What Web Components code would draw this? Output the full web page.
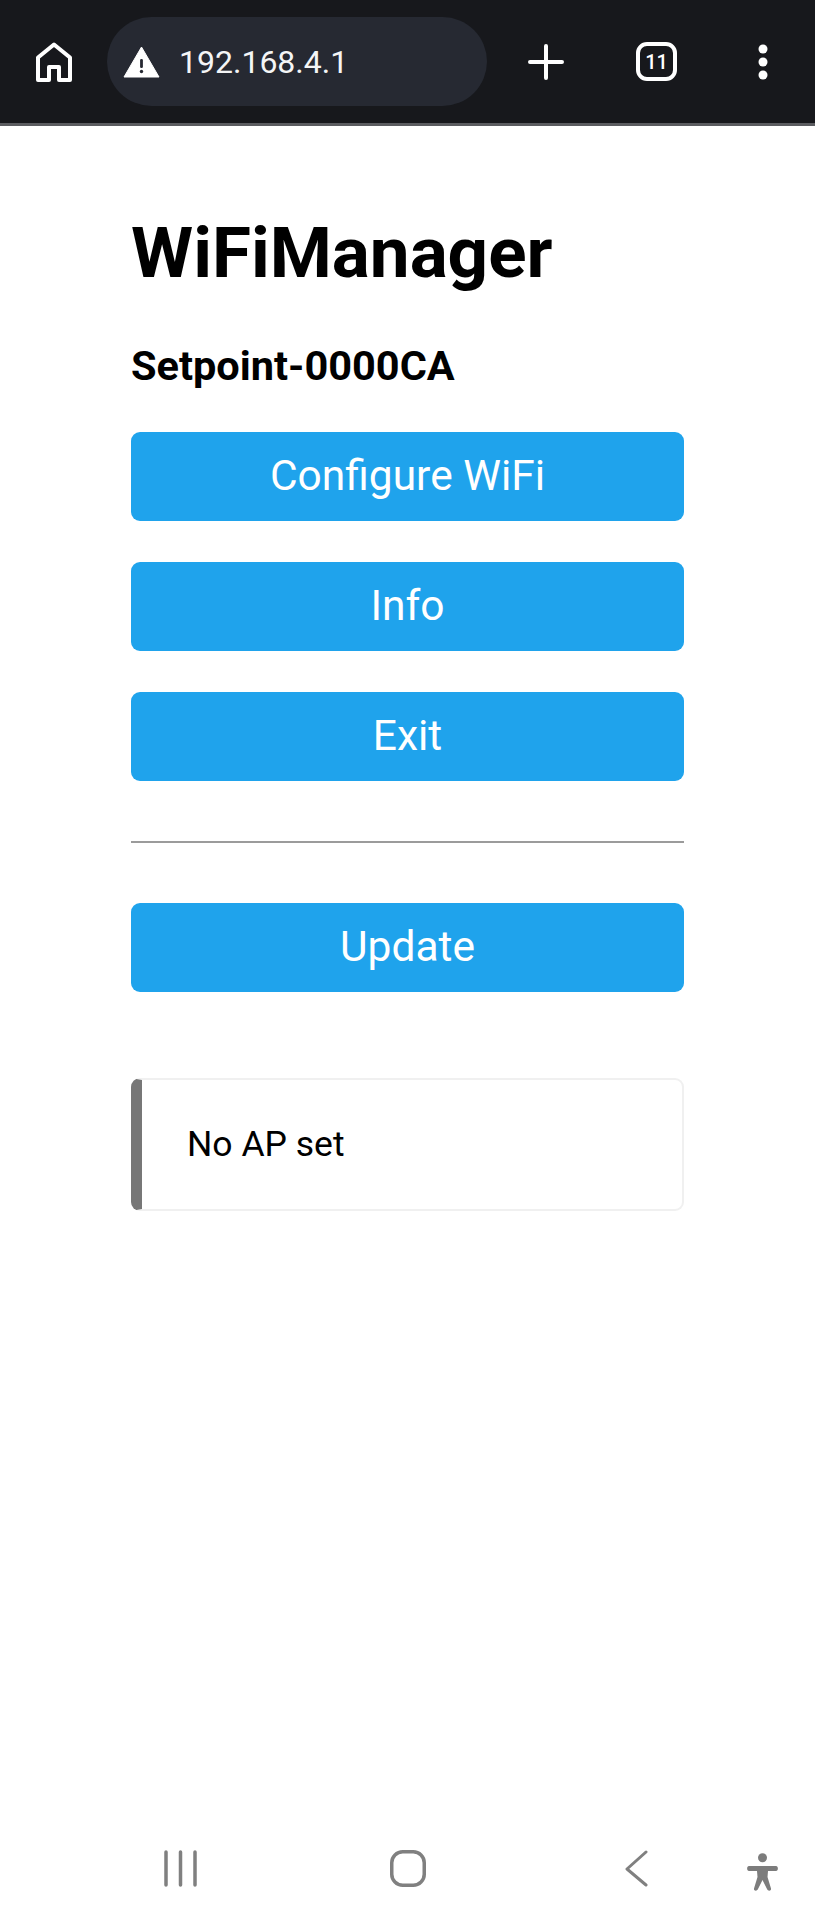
<!DOCTYPE html>
<html>
<head>
<meta charset="utf-8">
<title>WiFiManager</title>
<style>
    html, body { margin: 0; padding: 0; background: #fff; }
    body { font-family: Roboto, "Liberation Sans", sans-serif; width: 815px; height: 1920px; overflow: hidden; }
    .screen { display: flex; flex-direction: column; height: 1920px; }
</style>
</head>
<body>
<div class="screen">
    <browser-bar url="192.168.4.1" tabs="11"></browser-bar>
    <wm-page>
        <wm-title slot="head" sub="Setpoint-0000CA">WiFiManager</wm-title>
        <wm-button>Configure WiFi</wm-button>
        <wm-button>Info</wm-button>
        <wm-button>Exit</wm-button>
        <wm-rule></wm-rule>
        <wm-button>Update</wm-button>
        <wm-msg>No AP set</wm-msg>
    </wm-page>
    <nav-bar></nav-bar>
</div>

<script>
/* || Browser chrome */
const BrowserBarTemplate = document.createElement("template");
BrowserBarTemplate.innerHTML = `
    <style>
        :host {
            display: flex;
            flex: none;
            align-items: center;
            box-sizing: border-box;
            height: 126px;
            padding: 0 0 0 36px;
            background: #17181c;
            border-bottom: 3px solid #5b5c60;
            color: #fff;
        }
        svg { display: block; flex: none; }
        #pill {
            display: flex;
            align-items: center;
            box-sizing: border-box;
            width: 380px;
            height: 89px;
            margin-left: 35px;
            padding-left: 16px;
            border-radius: 45px;
            background: #262932;
        }
        #url {
            margin-left: 19px;
            font-size: 32px;
            color: #f4f5f6;
        }
        #plus { margin-left: 41px; }
        #tabs {
            display: flex;
            align-items: center;
            justify-content: center;
            box-sizing: border-box;
            width: 41px;
            height: 39px;
            margin-left: 72px;
            border: 4px solid #fff;
            border-radius: 11px;
            font-size: 20px;
            font-weight: 500;
        }
        #dots { margin-left: 81px; }
    </style>
    <svg width="36" height="40" viewBox="0 0 36 40" fill="none" stroke="#fff" stroke-width="4" stroke-linejoin="round">
        <path d="M2 38V15.500L18 2.500L34 15.500V38H23V25H13V38Z"/>
    </svg>
    <div id="pill">
        <svg width="37" height="32" viewBox="0 0 37 32">
            <path fill="#fff" stroke="#fff" stroke-width="1" stroke-linejoin="round" d="M18.500 1L36 31H1Z"/>
            <rect x="17.100" y="13" width="2.800" height="9" rx="1.200" fill="#262932"/>
            <circle cx="18.500" cy="25.500" r="1.700" fill="#262932"/>
        </svg>
        <span id="url"></span>
    </div>
    <svg id="plus" width="36" height="36" viewBox="0 0 36 36" stroke="#fff" stroke-width="4" stroke-linecap="round">
        <path d="M18 2V34M2 18H34"/>
    </svg>
    <div id="tabs"></div>
    <svg id="dots" width="10" height="36" viewBox="0 0 10 36" fill="#fff">
        <circle cx="5" cy="5" r="4.500"/><circle cx="5" cy="18" r="4.500"/><circle cx="5" cy="31" r="4.500"/>
    </svg>
`;

class BrowserBar extends HTMLElement {
    constructor() {
        super();
        this.attachShadow( {mode: 'open'} );
        this.shadowRoot.appendChild(BrowserBarTemplate.content.cloneNode(true));
    }
    connectedCallback() {
        this.shadowRoot.querySelector("#url").textContent = this.getAttribute("url");
        this.shadowRoot.querySelector("#tabs").textContent = this.getAttribute("tabs");
    }
}
customElements.define("browser-bar", BrowserBar);


/* || Page column */
const PageTemplate = document.createElement("template");
PageTemplate.innerHTML = `
    <style>
        :host {
            display: flex;
            flex-direction: column;
            flex: 1;
            box-sizing: border-box;
            width: 553px;
            margin-left: 131px;
            padding-top: 91px;
        }
    </style>
    <slot name="head"></slot>
    <slot></slot>
`;

class WmPage extends HTMLElement {
    constructor() {
        super();
        this.attachShadow( {mode: 'open'} );
        this.shadowRoot.appendChild(PageTemplate.content.cloneNode(true));
    }
}
customElements.define("wm-page", WmPage);


const TitleTemplate = document.createElement("template");
TitleTemplate.innerHTML = `
    <style>
        :host { display: block; color: #000; }
        h1 { margin: 0; font-size: 71px; font-weight: 700; line-height: 71px; }
        h3 { margin: 55px 0 43px; font-size: 41.500px; font-weight: 700; line-height: 46px; }
    </style>
    <h1><slot></slot></h1>
    <h3></h3>
`;

class WmTitle extends HTMLElement {
    constructor() {
        super();
        this.attachShadow( {mode: 'open'} );
        this.shadowRoot.appendChild(TitleTemplate.content.cloneNode(true));
    }
    connectedCallback() {
        this.shadowRoot.querySelector("h3").textContent = this.getAttribute("sub");
    }
}
customElements.define("wm-title", WmTitle);


const ButtonTemplate = document.createElement("template");
ButtonTemplate.innerHTML = `
    <style>
        :host {
            display: block;
            height: 89px;
            margin-bottom: 41px;
            border-radius: 9px;
            background: #1fa3ec;
            color: #fff;
            font-size: 42.500px;
            line-height: 87px;
            text-align: center;
        }
    </style>
    <slot></slot>
`;

class WmButton extends HTMLElement {
    constructor() {
        super();
        this.attachShadow( {mode: 'open'} );
        this.shadowRoot.appendChild(ButtonTemplate.content.cloneNode(true));
    }
}
customElements.define("wm-button", WmButton);


const RuleTemplate = document.createElement("template");
RuleTemplate.innerHTML = `
    <style>
        :host {
            display: block;
            height: 2px;
            margin: 19px 0 60px;
            background: #9b9b9b;
        }
    </style>
`;

class WmRule extends HTMLElement {
    constructor() {
        super();
        this.attachShadow( {mode: 'open'} );
        this.shadowRoot.appendChild(RuleTemplate.content.cloneNode(true));
    }
}
customElements.define("wm-rule", WmRule);


const MsgTemplate = document.createElement("template");
MsgTemplate.innerHTML = `
    <style>
        :host {
            display: block;
            box-sizing: border-box;
            height: 133px;
            margin-top: 45px;
            padding-left: 45px;
            border: 2px solid #f0f0f0;
            border-left: 11px solid #777;
            border-radius: 9px;
            color: #000;
            font-size: 35.500px;
            line-height: 128px;
        }
    </style>
    <slot></slot>
`;

class WmMsg extends HTMLElement {
    constructor() {
        super();
        this.attachShadow( {mode: 'open'} );
        this.shadowRoot.appendChild(MsgTemplate.content.cloneNode(true));
    }
}
customElements.define("wm-msg", WmMsg);


/* || System navigation */
const NavBarTemplate = document.createElement("template");
NavBarTemplate.innerHTML = `
    <style>
        :host {
            display: flex;
            flex: none;
            align-items: center;
            box-sizing: border-box;
            height: 104px;
            padding: 0 0 0 164px;
        }
        svg { display: block; flex: none; }
        #home { margin-left: 193px; }
        #back { margin-left: 198px; }
        #person { margin-left: 99px; margin-top: 8px; }
    </style>
    <svg width="33" height="37" viewBox="0 0 33 37" stroke="#808080" stroke-width="3.500" stroke-linecap="round">
        <path d="M2 2V35M16.500 2V35M31 2V35"/>
    </svg>
    <svg id="home" width="36" height="37" viewBox="0 0 36 37" fill="none" stroke="#808080" stroke-width="3.500">
        <rect x="1.750" y="1.750" width="32.500" height="33.500" rx="11"/>
    </svg>
    <svg id="back" width="24" height="37" viewBox="0 0 24 37" fill="none" stroke="#808080" stroke-width="3" stroke-linecap="round" stroke-linejoin="round">
        <path d="M22 2L3 19L22 35"/>
    </svg>
    <svg id="person" width="31" height="38" viewBox="0 0 31 38" fill="#7c7c7c">
        <circle cx="15.500" cy="4.800" r="4.500"/>
        <path d="M2 13H29C31.500 13 31.500 18 29 18H21L20.500 24L24 35.500C24.500 38 21 38.500 20 36L15.500 27L11 36C10 38.500 6.500 38 7 35.500L10.500 24L10 18H2C-0.500 18 -0.500 13 2 13Z"/>
    </svg>
`;

class NavBar extends HTMLElement {
    constructor() {
        super();
        this.attachShadow( {mode: 'open'} );
        this.shadowRoot.appendChild(NavBarTemplate.content.cloneNode(true));
    }
}
customElements.define("nav-bar", NavBar);
</script>
</body>
</html>
